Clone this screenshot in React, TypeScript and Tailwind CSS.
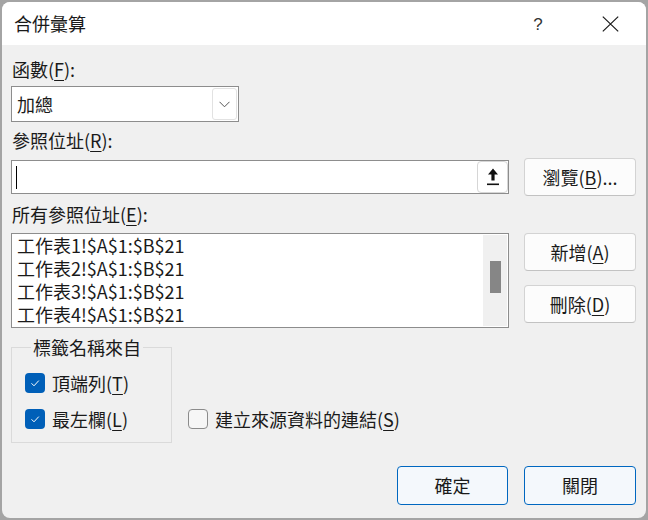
import React from "react";

const U = ({ c }: { c: string }) => (
  <span className="underline decoration-1 underline-offset-[3px]">{c}</span>
);

const Checkbox = ({ checked }: { checked: boolean }) =>
  checked ? (
    <div className="w-[20px] h-[20px] rounded-[4px] bg-[#005fb8] flex items-center justify-center shrink-0">
      <svg width="12" height="10" viewBox="0 0 12 10">
        <path d="M2.5 5.3 L5 7.8 L9.8 2.6" fill="none" stroke="white" strokeWidth="1" />
      </svg>
    </div>
  ) : (
    <div className="w-[20px] h-[20px] rounded-[4px] border border-[#8b8b8b] bg-[#f6f6f6] shrink-0" />
  );

const Btn = ({ children, cls }: { children: React.ReactNode; cls: string }) => (
  <div
    className={
      "w-[112px] flex items-center justify-center rounded-[4px] border border-[#d3d3d3] border-b-[#c2c2c2] bg-[#fcfcfc] text-[#1a1a1a] " +
      cls
    }
  >
    {children}
  </div>
);

export default function App() {
  return (
    <div className="w-[648px] h-[520px] bg-[#a4a4a4] p-[2px] font-['Noto_Sans_CJK_TC','Noto_Sans',sans-serif] text-[18px] leading-[23px] text-[#1a1a1a]">
      <div className="w-[644px] h-[516px] rounded-[8px] overflow-hidden flex flex-col bg-[#f0f0f0]">
        {/* title bar */}
        <div className="h-[43px] bg-white flex items-center shrink-0">
          <div className="pl-[12px] flex-1 text-[#1a1a1a]">合併彙算</div>
          <div className="w-[20px] text-center text-[17px] font-['Liberation_Sans',sans-serif] text-[#333] mr-[54px] mt-[2px]">?</div>
          <div className="mr-[27px] flex items-center">
            <svg width="17" height="16" viewBox="0 0 17 16">
              <path d="M0.8 0.6 L16.2 15.4 M16.2 0.6 L0.8 15.4" stroke="#1a1a1a" strokeWidth="1.2" />
            </svg>
          </div>
        </div>

        {/* body */}
        <div className="flex-1 flex flex-col pl-[9px] pr-[10px]">
          <div className="mt-[13px] ml-[1px]">
            函數(<U c="F" />):
          </div>
          <div className="mt-[5px] w-[228px] h-[36px] border border-[#8d8d8d] bg-white flex items-stretch p-[1px]">
            <div className="flex-1 pl-[4px] flex items-center">加總</div>
            <div className="w-[25px] rounded-[3px] border border-[#e2e2e2] flex items-center justify-center">
              <svg width="11" height="7" viewBox="0 0 11 7">
                <path d="M0.5 0.8 L5.5 5.8 L10.5 0.8" fill="none" stroke="#555" strokeWidth="1" />
              </svg>
            </div>
          </div>

          <div className="mt-[7px] ml-[1px]">
            參照位址(<U c="R" />):
          </div>
          <div className="mt-[6px] flex items-center gap-[15px]">
            <div className="w-[498px] h-[34px] border border-[#8d8d8d] bg-white flex items-stretch">
              <div className="flex-1 pl-[4px] flex items-center">
                <div className="w-[1px] h-[23px] bg-black" />
              </div>
              <div className="w-[31px] rounded-[4px] border border-[#d6d6d6] bg-white flex items-center justify-center">
                <svg width="12" height="18" viewBox="0 0 12 18">
                  <path d="M6 0.5 L11 6.5 L7.6 6.5 L7.6 12.5 L4.4 12.5 L4.4 6.5 L1 6.5 Z" fill="#111" />
                  <rect x="0" y="15.5" width="12" height="1.6" fill="#111" />
                </svg>
              </div>
            </div>
            <Btn cls="h-[38px]">
              瀏覽(<U c="B" />)...
            </Btn>
          </div>

          <div className="mt-[7px] ml-[1px]">
            所有參照位址(<U c="E" />):
          </div>
          <div className="mt-[7px] flex items-start gap-[15px]">
            <div className="w-[498px] h-[95px] border border-[#8d8d8d] bg-white flex">
              <div className="flex-1 pl-[5px] flex flex-col">
                <div className="h-[23px]">工作表1!$A$1:$B$21</div>
                <div className="h-[23px]">工作表2!$A$1:$B$21</div>
                <div className="h-[23px]">工作表3!$A$1:$B$21</div>
                <div className="h-[23px]">工作表4!$A$1:$B$21</div>
              </div>
              <div className="w-[24px] my-[1px] mr-[1px] bg-[#f0f0f0] pt-[26px] flex justify-center">
                <div className="w-[11px] h-[32px] bg-[#868686]" />
              </div>
            </div>
            <div className="flex flex-col gap-[14px]">
              <Btn cls="h-[38px]">
                新增(<U c="A" />)
              </Btn>
              <Btn cls="h-[38px]">
                刪除(<U c="D" />)
              </Btn>
            </div>
          </div>

          <div className="mt-[8px] flex items-end gap-[16px]">
            <fieldset className="w-[161px] border border-[#dadada] pl-[13px] pb-[13px] flex flex-col">
              <legend className="ml-[6px] px-[2px]">標籤名稱來自</legend>
              <div className="mt-[14px] flex items-center gap-[7px] h-[20px]">
                <Checkbox checked />
                <span>
                  頂端列(<U c="T" />)
                </span>
              </div>
              <div className="mt-[16px] flex items-center gap-[7px] h-[20px]">
                <Checkbox checked />
                <span>
                  最左欄(<U c="L" />)
                </span>
              </div>
            </fieldset>
            <div className="mb-[14px] flex items-center gap-[7px] h-[20px]">
              <Checkbox checked={false} />
              <span>
                建立來源資料的連結(<U c="S" />)
              </span>
            </div>
          </div>

          <div className="mt-[23px] flex justify-end gap-[16px]">
            <div className="w-[111px] h-[39px] rounded-[4px] border border-[#0067c0] bg-[#f4f8fc] flex items-center justify-center">
              確定
            </div>
            <div className="w-[112px] h-[39px] rounded-[4px] border border-[#0067c0] bg-[#f4f8fc] flex items-center justify-center">
              關閉
            </div>
          </div>
        </div>
      </div>
    </div>
  );
}
